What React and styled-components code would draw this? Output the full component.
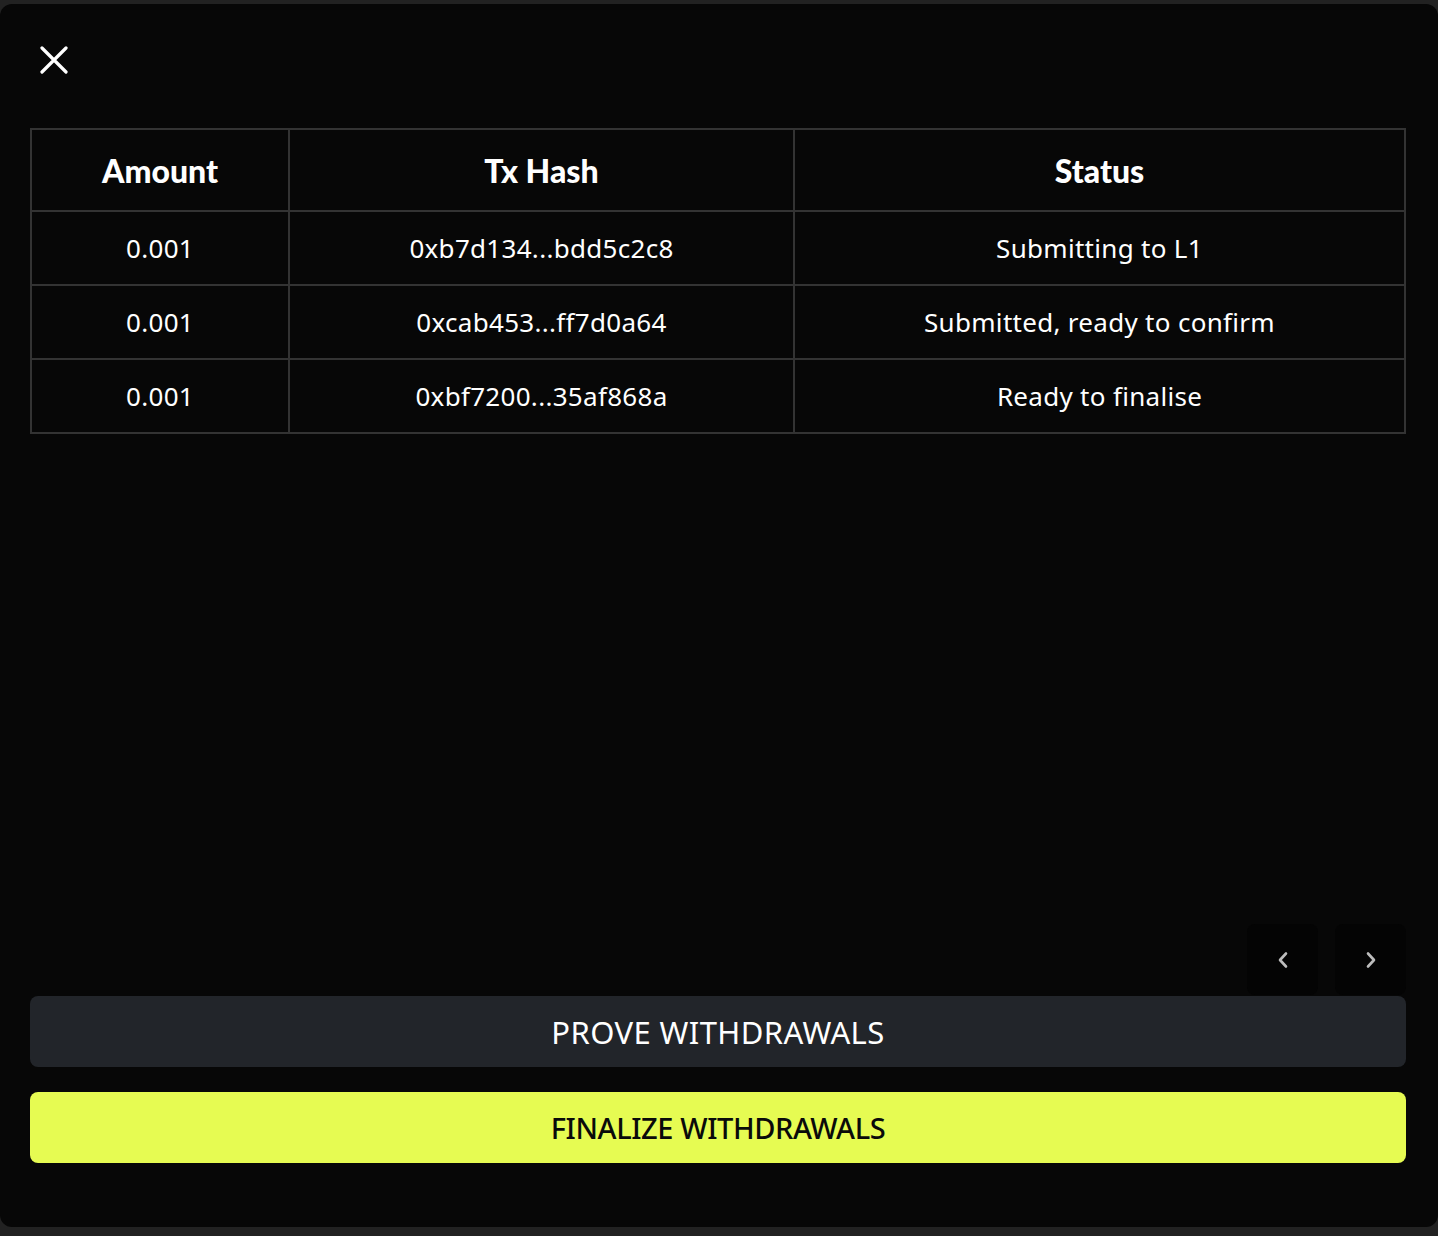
import React from "react";
import styled, { createGlobalStyle } from "styled-components";

const Global = createGlobalStyle`
  html, body { margin: 0; padding: 0; background: #222222; }
  body { font-family: "Noto Sans", "Open Sans", sans-serif; }
  #root { padding-top: 4px; }
`;

const Modal = styled.div`
  box-sizing: border-box;
  width: 1438px;
  height: 1223px;
  background: #070707;
  border-radius: 12px;
  padding: 42px 32px 64px 30px;
  display: flex;
  flex-direction: column;
`;

const CloseButton = styled.button`
  width: 28px;
  height: 28px;
  padding: 0;
  margin: 0 0 54px 10px;
  border: 0;
  background: transparent;
  color: #ffffff;
  cursor: pointer;
  display: flex;
  align-items: center;
  justify-content: center;
`;

const Table = styled.table`
  width: 1374px;
  border-collapse: collapse;
  table-layout: fixed;
  color: #ffffff;
`;

const HeadCell = styled.th`
  height: 80px;
  border: 2px solid #333333;
  font-family: "Lato", "Noto Sans", sans-serif;
  font-weight: 900;
  font-size: 32px;
  text-align: center;
  padding: 0;
`;

const Cell = styled.td`
  height: 72px;
  border: 2px solid #333333;
  font-size: 26px;
  font-weight: 400;
  text-align: center;
  padding: 0;
  letter-spacing: 0.3px;
`;

const Spacer = styled.div`
  flex: 1;
`;

const Pager = styled.div`
  display: flex;
  justify-content: flex-end;
  gap: 17px;
`;

const PageButton = styled.button`
  width: 71px;
  height: 71px;
  border: 0;
  border-radius: 8px;
  background: #040404;
  color: #bdbdbd;
  display: flex;
  align-items: center;
  justify-content: center;
  padding: 0;
  cursor: pointer;
`;

const ActionButton = styled.button`
  width: 1376px;
  height: 71px;
  border: 0;
  border-radius: 8px;
  background: ${(p) => (p.$primary ? "#e6fb52" : "#22252a")};
  color: ${(p) => (p.$primary ? "#0a0a0a" : "#ffffff")};
  font-family: "Noto Sans", "Open Sans", sans-serif;
  font-size: ${(p) => (p.$primary ? "29px" : "31px")};
  font-weight: ${(p) => (p.$primary ? 500 : 400)};
  letter-spacing: ${(p) => (p.$primary ? "-0.4px" : "0.4px")};
  margin-top: ${(p) => (p.$primary ? "25px" : "1px")};
  cursor: pointer;
`;

const rows = [
  { amount: "0.001", hash: "0xb7d134...bdd5c2c8", status: "Submitting to L1" },
  { amount: "0.001", hash: "0xcab453...ff7d0a64", status: "Submitted, ready to confirm" },
  { amount: "0.001", hash: "0xbf7200...35af868a", status: "Ready to finalise" },
];

const Chevron = ({ dir }) => (
  <svg width="20" height="20" viewBox="0 0 20 20" fill="none">
    <path
      d={dir === "left" ? "M13 3.5 L7 10 L13 16.5" : "M7 3.5 L13 10 L7 16.5"}
      stroke="currentColor"
      strokeWidth="2.6"
      strokeLinecap="round"
      strokeLinejoin="round"
    />
  </svg>
);

export default function App() {
  return (
    <>
      <Global />
      <Modal>
        <CloseButton aria-label="Close">
          <svg width="28" height="28" viewBox="0 0 28 28" fill="none">
            <path d="M2 2 L26 26 M26 2 L2 26" stroke="#ffffff" strokeWidth="3.2" strokeLinecap="round" />
          </svg>
        </CloseButton>
        <Table>
          <colgroup>
            <col style={{ width: "258px" }} />
            <col style={{ width: "505px" }} />
            <col style={{ width: "611px" }} />
          </colgroup>
          <thead>
            <tr>
              <HeadCell>Amount</HeadCell>
              <HeadCell>Tx Hash</HeadCell>
              <HeadCell>Status</HeadCell>
            </tr>
          </thead>
          <tbody>
            {rows.map((r) => (
              <tr key={r.hash}>
                <Cell>{r.amount}</Cell>
                <Cell>{r.hash}</Cell>
                <Cell>{r.status}</Cell>
              </tr>
            ))}
          </tbody>
        </Table>
        <Spacer />
        <Pager>
          <PageButton aria-label="Previous page">
            <Chevron dir="left" />
          </PageButton>
          <PageButton aria-label="Next page">
            <Chevron dir="right" />
          </PageButton>
        </Pager>
        <ActionButton>PROVE WITHDRAWALS</ActionButton>
        <ActionButton $primary>FINALIZE WITHDRAWALS</ActionButton>
      </Modal>
    </>
  );
}
